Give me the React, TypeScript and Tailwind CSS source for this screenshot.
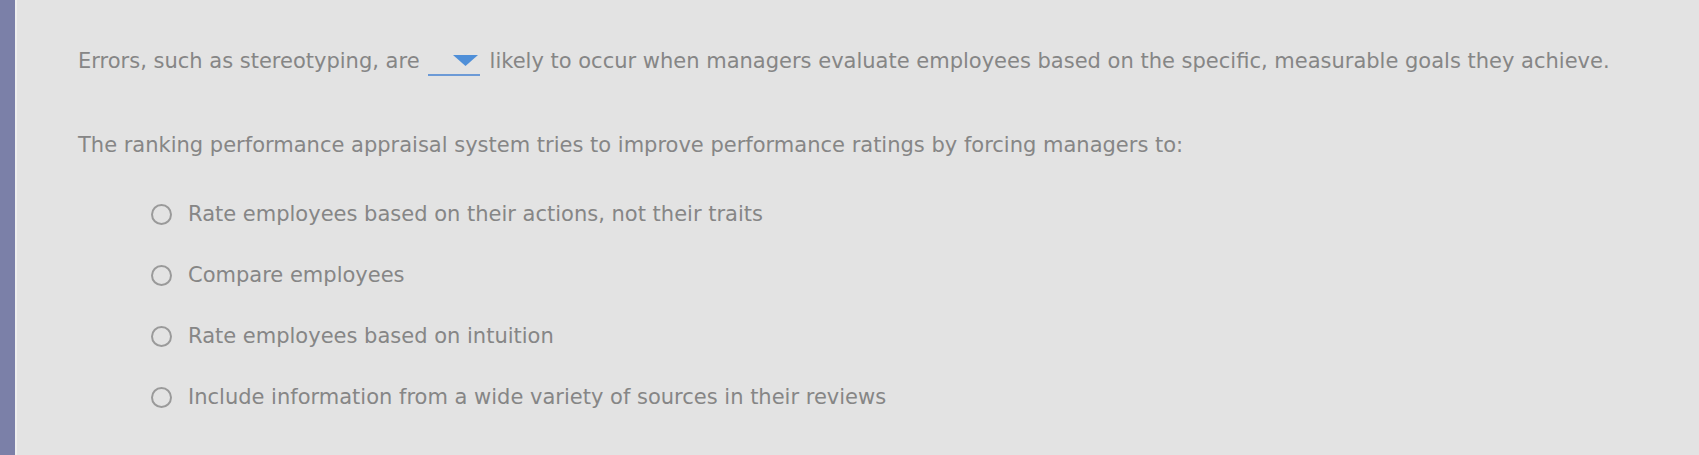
const options = [
  "Rate employees based on their actions, not their traits",
  "Compare employees",
  "Rate employees based on intuition",
  "Include information from a wide variety of sources in their reviews",
];

function Radio() {
  return (
    <span className="inline-block w-[21px] h-[21px] rounded-full border-[2px] border-[#9a9a9a] shrink-0" />
  );
}

export default function App() {
  return (
    <div className="flex w-[1699px] h-[455px] bg-[#e3e3e3] overflow-hidden">
      <div className="w-[15px] h-full bg-[#7b80a8] shrink-0" />
      <div className="w-[2px] h-full bg-[#eeeeee] shrink-0" />
      <div
        className="flex-1 pl-[61px] pt-[47px] text-[#868686] text-[21px] leading-[28px]"
        style={{ fontFamily: '"DejaVu Sans", Verdana, sans-serif' }}
      >
        <p className="flex items-start">
          <span>Errors, such as stereotyping, are</span>
          <span className="relative inline-block w-[52px] h-[29px] ml-[8px] mr-[10px] border-b-[2px] border-[#6c9ad6]">
            <svg
              className="absolute right-[2px] top-[8px]"
              width="25"
              height="11"
              viewBox="0 0 25 11"
            >
              <path d="M0 0 L25 0 L12.5 11 Z" fill="#4f8fd8" />
            </svg>
          </span>
          <span>
            likely to occur when managers evaluate employees based on the specific, measurable goals they achieve.
          </span>
        </p>
        <p className="mt-[55px]">
          The ranking performance appraisal system tries to improve performance ratings by forcing managers to:
        </p>
        <div className="mt-[41px] ml-[73px] flex flex-col gap-[33px]">
          {options.map((o) => (
            <div key={o} className="flex items-center gap-[16px]">
              <Radio />
              <span>{o}</span>
            </div>
          ))}
        </div>
      </div>
    </div>
  );
}
